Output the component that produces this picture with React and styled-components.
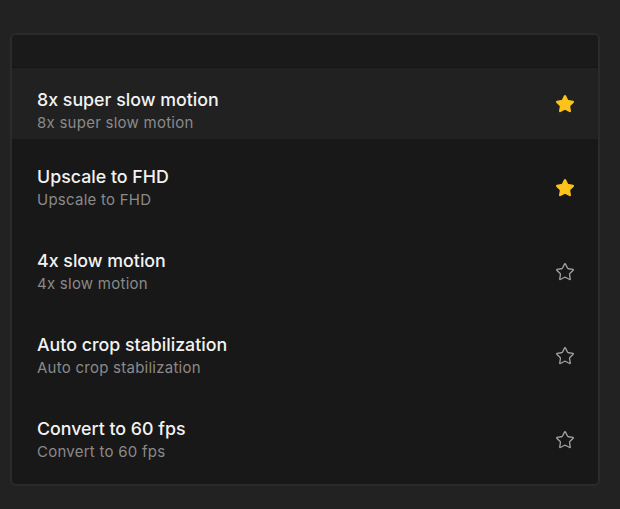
import React from 'react'
import styled, { createGlobalStyle } from 'styled-components'
import { Star } from 'lucide-react'

const items = [
    { title: '8x super slow motion', fav: true, active: true },
    { title: 'Upscale to FHD', fav: true },
    { title: '4x slow motion', fav: false },
    { title: 'Auto crop stabilization', fav: false },
    { title: 'Convert to 60 fps', fav: false },
]

export default function App() {
    return (
        <>
            <Global />
            <Page>
                <Card>
                    <Header />
                    <List>
                        {items.map((item) => (
                            <Row key={item.title} $active={item.active}>
                                <Text $active={item.active}>
                                    <Title>{item.title}</Title>
                                    <Sub>{item.title}</Sub>
                                </Text>
                                <Fav $on={item.fav}>
                                    <Star size={20} strokeWidth={1.6} fill={item.fav ? '#fcc419' : 'none'} />
                                </Fav>
                            </Row>
                        ))}
                    </List>
                </Card>
            </Page>
        </>
    )
}

const Global = createGlobalStyle`
    html, body {
        margin: 0;
        background: #222222;
    }
    body {
        font-family: Inter, "Noto Sans", sans-serif;
    }`
const Page = styled.div`
    padding: 33px 20px 24px 10px;
    min-height: 509px;
    box-sizing: border-box;`
const Card = styled.div`
    width: 590px;
    box-sizing: border-box;
    border: 2px solid #2b2b2b;
    border-radius: 6px;
    background: #181818;
    overflow: hidden;`
const Header = styled.div`
    height: 32px;
    background: #1a1a1a;
    border-bottom: 1px solid #151515;`
const List = styled.div`
    display: flex;
    flex-direction: column;
    padding-bottom: 2px;`
const Row = styled.div`
    display: flex;
    align-items: center;
    justify-content: space-between;
    height: ${(p) => (p.$active ? '71px' : '84px')};
    margin-bottom: ${(p) => (p.$active ? '7px' : '0')};
    padding: 0 23px 0 25px;
    background: ${(p) => (p.$active ? '#212121' : 'transparent')};`
const Text = styled.div`
    display: flex;
    flex-direction: column;
    gap: 3px;
    transform: ${(p) => (p.$active ? 'translateY(8px)' : 'none')};`
const Title = styled.div`
    font-size: 17.8px;
    font-weight: 500;
    color: #f2f2f2;
    line-height: 20px;`
const Sub = styled.div`
    font-size: 15px;
    color: #8a8a8a;
    line-height: 20px;
    letter-spacing: 0.25px;`
const Fav = styled.div`
    display: flex;
    color: ${(p) => (p.$on ? '#fcc419' : '#a0a0a0')};`
